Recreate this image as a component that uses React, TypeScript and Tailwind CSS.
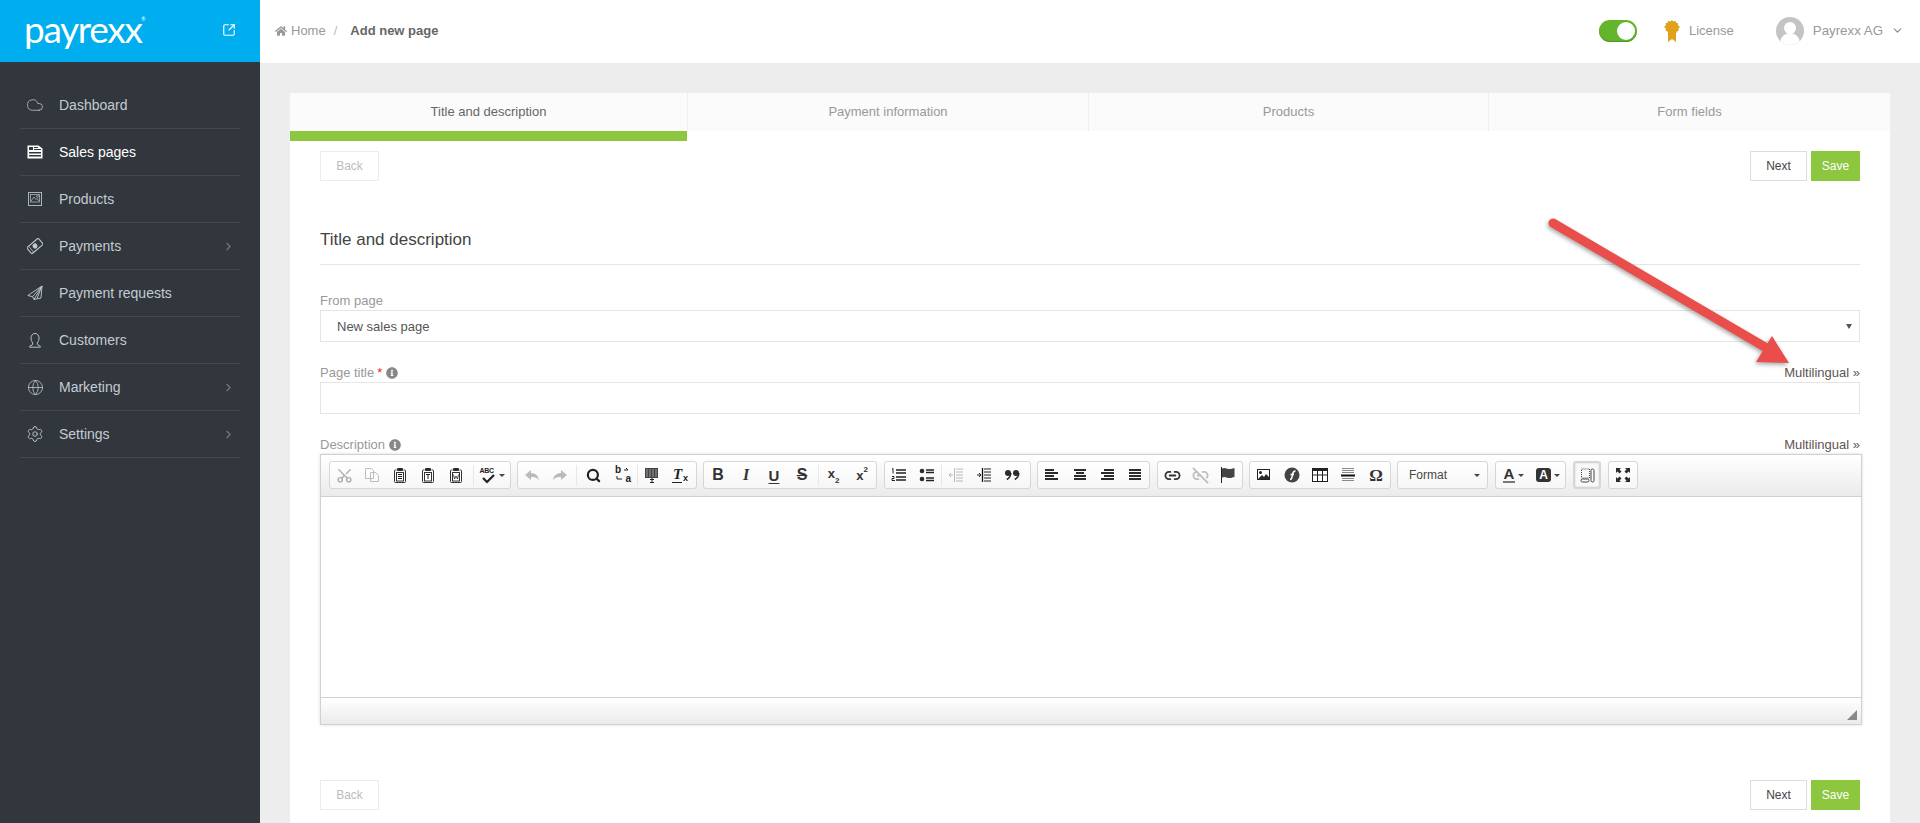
import React from 'react';
import { Cloud, ChevronRight, ChevronDown, SquareArrowOutUpRight, Globe, Settings, Scissors, Search, Link2, Link2Off } from 'lucide-react';
import { FaHome, FaInfoCircle } from 'react-icons/fa';

const NewspaperIcon = () => (
  <svg width="16" height="14" viewBox="0 0 16 14" className="shrink-0">
    <path d="M.5.5h11l4 3v10H.5z" fill="#fff" />
    <rect x="2" y="2" width="4" height="3" fill="#32363d" />
    <rect x="7" y="2" width="4" height="1" fill="#32363d" />
    <rect x="7" y="4" width="7" height="1" fill="#32363d" />
    <rect x="2" y="7" width="12" height="1.5" fill="#32363d" />
    <rect x="2" y="10" width="12" height="1.5" fill="#32363d" />
  </svg>
);

const ProductIcon = () => (
  <svg width="14" height="14" viewBox="0 0 14 14" fill="none" stroke="#a9b3ba" className="shrink-0">
    <rect x=".5" y=".5" width="13" height="13" />
    <rect x="2.5" y="2.5" width="9" height="7.5" strokeWidth=".8" />
    <path d="M3 9l3-4 2 2.5 1-1 2 2.5" strokeWidth=".8" />
    <circle cx="9.5" cy="4.3" r="1" strokeWidth=".8" />
  </svg>
);

const TicketIcon = () => (
  <svg width="16" height="16" viewBox="0 0 16 16" fill="none" stroke="#c3ccd2" className="shrink-0">
    <g transform="rotate(-40 8 8)">
      <rect x="0.5" y="4" width="15" height="8" rx="1" />
      <circle cx="8" cy="8" r="2" fill="#c3ccd2" />
      <path d="M3 4v8" strokeWidth=".7" />
    </g>
  </svg>
);

const PlaneIcon = () => (
  <svg width="16" height="16" viewBox="0 0 16 16" fill="none" stroke="#c3ccd2" strokeLinejoin="round" className="shrink-0">
    <path d="M15 1L.8 10.500l4.700 1.200L7 14.500l7-1.500zM15 1L5.500 11.700M15 1l-5 12.500M15 1L7 14.500" strokeWidth=".9" />
  </svg>
);

const UserIcon = () => (
  <svg width="16" height="16" viewBox="0 0 16 16" fill="none" stroke="#b9c3ca" strokeWidth="1" className="shrink-0">
    <path d="M5.7 11C4.3 9 4 7.5 4 6a4 4.6 0 0 1 8 0c0 1.500-.3 3-1.700 5l0 1.500 3 1.700v1H2.700v-1l3-1.700z" />
  </svg>
);

const navItems = [
  { label: 'Dashboard', icon: <Cloud size={18} strokeWidth={1} color="#c3ccd2" className="shrink-0" /> },
  { label: 'Sales pages', icon: <NewspaperIcon />, active: true },
  { label: 'Products', icon: <ProductIcon /> },
  { label: 'Payments', icon: <TicketIcon />, arrow: true },
  { label: 'Payment requests', icon: <PlaneIcon /> },
  { label: 'Customers', icon: <UserIcon /> },
  { label: 'Marketing', icon: <Globe size={17} strokeWidth={1.1} color="#c3ccd2" className="shrink-0" />, arrow: true },
  { label: 'Settings', icon: <Settings size={18} strokeWidth={1.2} color="#c3ccd2" className="shrink-0" />, arrow: true },
];

const tabs = [
  { label: 'Title and description', width: 'w-[398px]', active: true },
  { label: 'Payment information', width: 'w-[401px]' },
  { label: 'Products', width: 'w-[400px]' },
  { label: 'Form fields', width: 'flex-1', last: true },
];

// 16x16 toolbar drawing
const Svg: React.FC<{ children: React.ReactNode; className?: string }> = ({ children, className }) => (
  <svg width="16" height="16" viewBox="0 0 16 16" fill="#2b2b2b" className={className}>
    {children}
  </svg>
);

const Lines = ({ rows }: { rows: number[][] }) => (
  <Svg>
    {rows.map(([x, w], i) => (
      <rect key={i} x={x} y={2 + i * 3} width={w} height="2" />
    ))}
  </Svg>
);

const PasteIcon = ({ children }: { children: React.ReactNode }) => (
  <Svg>
    <path d="M4.500 3H3.500a1 1 0 0 0-1 1v10.500a1 1 0 0 0 1 1h9a1 1 0 0 0 1-1V4a1 1 0 0 0-1-1h-1" fill="none" stroke="#333" />
    <rect x="5" y="1" width="6" height="3" rx="1" />
    <rect x="4.500" y="5.500" width="7" height="8.500" fill="#fff" stroke="#333" />
    {children}
  </Svg>
);

const Arrowhead = () => <span className="ml-[3px] w-0 h-0 border-x-[3px] border-x-transparent border-t-[3px] border-t-[#444]" />;

const Btn: React.FC<{ children: React.ReactNode; w?: string; grey?: boolean }> = ({ children, w = 'w-[28px]', grey }) => (
  <div className={`${w} h-full flex items-center justify-center ${grey ? 'opacity-30' : ''}`}>{children}</div>
);

const Sep = ({ className = '' }: { className?: string }) => <div className={`w-px h-[21px] self-center bg-[#e8e8e8] ${className}`} />;

const Group: React.FC<{ children: React.ReactNode; className?: string }> = ({ children, className = '' }) => (
  <div className={`h-[28px] flex items-stretch border border-[#d6d6d6] rounded-[3px] bg-gradient-to-b from-white to-[#f6f6f6] ${className}`}>
    {children}
  </div>
);

const Toolbar = () => (
  <div className="h-[42px] pl-[8px] pt-[6px] flex gap-[6px] border-b border-[#d1d1d1] bg-gradient-to-b from-white to-[#ebebeb]">
    <Group className="w-[182px]">
      <Btn grey><Scissors size={17} strokeWidth={2} className="rotate-[-90deg]" /></Btn>
      <Btn grey>
        <Svg>
          <path d="M1.500 1.500h6l2 2v8h-8zM6.500 5.500h5l3 3v6h-8z" fill="#fff" stroke="#333" />
        </Svg>
      </Btn>
      <Btn><PasteIcon><path d="M6 7.500h4M6 9.500h4M6 11.500h4" stroke="#222" /></PasteIcon></Btn>
      <Btn><PasteIcon><path d="M6 7.500h4M8 7.500v4.500" stroke="#222" /></PasteIcon></Btn>
      <Btn><PasteIcon><path d="M5.500 7.500l1 4.500 1.500-3 1.500 3 1-4.500" stroke="#222" fill="none" strokeWidth=".8" /></PasteIcon></Btn>
      <Sep className="ml-[3px]" />
      <Btn w="flex-1">
        <div className="relative w-[16px] h-[16px] text-[7px] font-bold leading-[8px] text-[#222] tracking-[-0.3px]">
          ABC
          <svg width="14" height="10" viewBox="0 0 14 10" className="absolute left-[2px] top-[7px]">
            <path d="M1 4l4 4 7-7" fill="none" stroke="#222" strokeWidth="2.200" />
          </svg>
        </div>
        <Arrowhead />
      </Btn>
    </Group>

    <Group className="w-[180px]">
      <Btn grey><Svg><path d="M7 3L1 8l6 5v-3c3 0 6 .5 8 3-.5-4-3.500-7-8-7z" /></Svg></Btn>
      <Btn grey><Svg><path d="M9 3l6 5-6 5v-3c-3 0-6 .5-8 3 .5-4 3.500-7 8-7z" /></Svg></Btn>
      <Sep className="ml-[2px]" />
      <Btn w="w-[32px]"><Search size={15} strokeWidth={3.500} color="#222" /></Btn>
      <Btn>
        <div className="relative w-[16px] h-[16px] text-[#222] font-bold text-[10px] leading-[10px]">
          <span className="absolute left-0 top-[-2px]">b</span>
          <span className="absolute right-0 bottom-[-1px]">a</span>
          <svg width="16" height="16" viewBox="0 0 16 16" className="absolute inset-0" fill="none" stroke="#222">
            <path d="M9 3h4l-2-2M7 12H2V9" />
          </svg>
        </div>
      </Btn>
      <Sep />
      <Btn>
        <Svg>
          <rect x="1" y="1" width="13" height="10" fill="#444" />
          <path d="M2 3h11M2 5h11M2 7h11M2 9h11" stroke="#ddd" strokeWidth=".6" strokeDasharray="2 1" />
          <path d="M6 12.500h4M8 11v4M6 15.500h4" stroke="#222" />
        </Svg>
      </Btn>
      <Btn>
        <div className="relative w-[16px] h-[16px] text-[#222] font-['Liberation_Serif',serif] italic font-bold text-[15px] leading-[14px]">
          <span className="absolute left-[1px] top-0">T</span>
          <span className="absolute right-0 bottom-[0px] text-[9px] leading-[9px] not-italic font-['Liberation_Sans',sans-serif]">x</span>
          <div className="absolute left-0 bottom-0 w-[10px] h-[1.500px] bg-[#222]" />
        </div>
      </Btn>
    </Group>

    <Group className="w-[174px]">
      <Btn><span className="text-[16px] font-bold text-[#333] leading-none">B</span></Btn>
      <Btn><span className="text-[16px] font-bold italic text-[#333] leading-none font-['Liberation_Serif',serif]">I</span></Btn>
      <Btn><span className="text-[15px] font-bold text-[#333] leading-none underline underline-offset-2">U</span></Btn>
      <Btn><span className="text-[16px] font-bold text-[#333] leading-none line-through">S</span></Btn>
      <Sep className="ml-[2px]" />
      <Btn w="w-[29px]"><span className="text-[13px] font-bold text-[#333] leading-none">x<sub className="text-[8px] align-[-3px] leading-none">2</sub></span></Btn>
      <Btn><span className="text-[13px] font-bold text-[#333] leading-none">x<sup className="text-[8px] align-[4px] leading-none">2</sup></span></Btn>
    </Group>

    <Group className="w-[147px] ml-px">
      <Btn>
        <Svg>
          <path d="M5 3h10M5 6h10M5 10h10M5 13h10" stroke="#222" strokeWidth="1.300" />
          <path d="M1 2l1-.5v5M1 9.500h2v2H1v2h3" fill="none" stroke="#222" />
        </Svg>
      </Btn>
      <Btn>
        <Svg>
          <circle cx="3" cy="4" r="2.300" />
          <circle cx="3" cy="12" r="2.300" />
          <path d="M7 3h8M7 5.500h8M7 11h8M7 13.500h8" stroke="#222" strokeWidth="1.300" />
        </Svg>
      </Btn>
      <Sep />
      <Btn grey>
        <Svg>
          <path d="M6.500 1v14M8 2h7M8 5h7M8 8h7M8 11h7M8 14h7" stroke="#222" fill="none" />
          <path d="M5 8H1M3 6L1 8l2 2" stroke="#222" fill="none" />
        </Svg>
      </Btn>
      <Btn>
        <Svg>
          <path d="M6.500 1v14" stroke="#111" strokeWidth="1.300" />
          <path d="M8 2h7M8 5h7M8 8h7M8 11h7M8 14h7" stroke="#222" fill="none" />
          <path d="M1 8h4M3 6l2 2-2 2" stroke="#222" fill="none" />
        </Svg>
      </Btn>
      <Btn>
        <Svg>
          <circle cx="4" cy="6" r="3" />
          <path d="M6.800 6c0 3-1.500 5-4 6.500" fill="none" stroke="#2b2b2b" strokeWidth="1.600" />
          <circle cx="12" cy="6" r="3" />
          <path d="M14.800 6c0 3-1.500 5-4 6.500" fill="none" stroke="#2b2b2b" strokeWidth="1.600" />
        </Svg>
      </Btn>
    </Group>

    <Group className="w-[113px]">
      <Btn><Lines rows={[[1, 9], [1, 13], [1, 9], [1, 13]]} /></Btn>
      <Btn><Lines rows={[[2, 12], [4, 8], [2, 12], [2, 12]]} /></Btn>
      <Btn><Lines rows={[[5, 10], [2, 13], [5, 10], [2, 13]]} /></Btn>
      <Btn><Lines rows={[[2, 12], [2, 12], [2, 12], [2, 12]]} /></Btn>
    </Group>

    <Group className="w-[86px] ml-px">
      <Btn><Link2 size={17} strokeWidth={2.500} color="#333" /></Btn>
      <Btn grey><Link2Off size={17} strokeWidth={2.500} color="#333" /></Btn>
      <Btn>
        <Svg>
          <path d="M1.500 0v16" stroke="#222" />
          <path d="M2 1.500c3-1.500 5 .5 7 .5s4-.5 5.500-1v9c-2 .5-3.500 1-5.500 1s-4-2-7-.5z" fill="#444" />
        </Svg>
      </Btn>
    </Group>

    <Group className="w-[142px]">
      <Btn>
        <Svg>
          <rect x="1" y="2" width="13" height="11" fill="#222" />
          <rect x="2" y="3" width="11" height="9" fill="#fff" />
          <circle cx="4.500" cy="5.500" r="1.500" fill="#222" />
          <path d="M2 12l4-4 2 2 2-3 3 3v2z" />
        </Svg>
      </Btn>
      <Btn>
        <Svg>
          <circle cx="8" cy="8" r="7.500" fill="#444" />
          <path d="M6 12.500c2 0 2-2 2.500-5S10 4 11.500 4M6.500 7.500H10" fill="none" stroke="#fff" strokeWidth="1.500" />
        </Svg>
      </Btn>
      <Btn>
        <Svg>
          <rect x="0" y="1" width="16" height="14" fill="#222" />
          <path d="M1 4h4v3.500H1zM6 4h4v3.500H6zM11 4h4v3.500h-4zM1 8.500h4V14H1zM6 8.500h4V14H6zM11 8.500h4V14h-4z" fill="#fff" />
        </Svg>
      </Btn>
      <Btn>
        <Svg>
          <path d="M2 1.500h12M2 3.500h12M2 5.500h12M2 11.500h12M2 13.500h12" stroke="#888" />
          <rect x="1" y="7.500" width="14" height="2" fill="#111" />
        </Svg>
      </Btn>
      <Btn><span className="text-[17px] font-bold text-[#333] leading-none font-['Liberation_Serif',serif]">Ω</span></Btn>
    </Group>

    <Group className="w-[91px] items-center pl-[11px] pr-[7px] justify-between">
      <span className="text-[12px] text-[#484848] self-center">Format</span>
      <span className="self-center w-0 h-0 border-x-[3px] border-x-transparent border-t-[3px] border-t-[#444]" />
    </Group>

    <Group className="w-[71px] ml-px">
      <Btn w="w-[35px]">
        <span className="text-[15px] leading-[14px] font-bold text-[#333] border-b-2 border-[#777] px-[1px]">A</span>
        <Arrowhead />
      </Btn>
      <Btn w="flex-1">
        <span className="w-[15px] h-[14px] rounded-[3px] bg-[#333] text-white text-[12px] leading-[14px] font-bold text-center">A</span>
        <Arrowhead />
      </Btn>
    </Group>

    <Group className="w-[28px] ml-px border-[#b0b0b0] border-2 bg-none bg-[#f9f9f9] shadow-[inset_0_0_2px_#ccc]">
      <Btn w="w-full">
        <svg width="15" height="15" viewBox="0 0 15 15" fill="none" stroke="#444">
          <path d="M1.500 1h8v9h-8z" strokeDasharray="1 1" />
          <rect x="11" y="1" width="3" height="13" rx="1.500" />
          <rect x="1" y="11" width="8" height="3" rx="1.500" />
        </svg>
      </Btn>
    </Group>

    <Group className="w-[30px] ml-px">
      <Btn w="w-full">
        <Svg>
          <path d="M1 1h5L4.500 2.500 6.500 4.500 4.500 6.500 2.500 4.500 1 6zM15 1v5l-1.500-1.500-2 2-2-2 2-2L10 1zM1 15v-5l1.500 1.500 2-2 2 2-2 2L6 15zM15 15h-5l1.500-1.500-2-2 2-2 2 2L15 10z" />
        </Svg>
      </Btn>
    </Group>
  </div>
);

const ActionRow = ({ className = '' }: { className?: string }) => (
  <div className={`flex justify-between ${className}`}>
    <button className="w-[59px] h-[30px] border border-[#ececec] text-[12px] text-[#bbb]">Back</button>
    <div className="flex gap-[4px]">
      <button className="w-[57px] h-[30px] border border-[#ddd] text-[12px] text-[#444]">Next</button>
      <button className="w-[49px] h-[30px] bg-[#8dc63f] text-[12px] text-white">Save</button>
    </div>
  </div>
);

const FieldLabel: React.FC<{ children: React.ReactNode; multi?: boolean }> = ({ children, multi }) => (
  <div className="h-[18px] flex items-center justify-between text-[13px] leading-[18px] text-[#999]">
    <div className="flex items-center">{children}</div>
    {multi && <span className="text-[#5e5450]">Multilingual »</span>}
  </div>
);

const Info = () => <FaInfoCircle size={12} color="#888" className="ml-[4px]" />;

export default function App() {
  return (
    <div className="relative w-full h-[823px] overflow-hidden flex bg-[#ededed] font-['Liberation_Sans',Arial,sans-serif]">
      <aside className="w-[260px] shrink-0 bg-[#32363d]">
        <div className="h-[62px] bg-[#00aeef] flex items-center justify-between pl-[24px] pr-[24px]">
          <div className="relative text-white text-[37px] font-['Lato',sans-serif] font-normal leading-none tracking-[-1.300px] pb-[6px]">
            payrexx
            <span className="absolute right-[-4px] top-[7px] text-[5px] tracking-normal">®</span>
          </div>
          <SquareArrowOutUpRight size={14} color="#fff" strokeWidth={2} className="mb-[3px]" />
        </div>
        <nav className="pt-[20px] px-[20px]">
          {navItems.map((item) => (
            <div key={item.label} className="h-[47px] flex items-center border-b border-[#43474e] pl-[7px] pr-[5px]">
              <div className="w-[16px] flex justify-center">{item.icon}</div>
              <span className={`ml-[16px] text-[14px] flex-1 ${item.active ? 'text-white' : 'text-[#c3ccd2]'}`}>{item.label}</span>
              {item.arrow && <ChevronRight size={13} color="#777c82" />}
            </div>
          ))}
        </nav>
      </aside>

      <main className="flex-1 min-w-0">
        <header className="h-[63px] bg-white flex items-center pl-[15px] pr-[16px] pb-[2px] text-[13px]">
          <FaHome size={12} color="#999" />
          <span className="ml-[4px] text-[#999]">Home</span>
          <span className="ml-[8px] text-[#bbb]">/</span>
          <span className="ml-[13px] font-bold text-[#666]">Add new page</span>
          <div className="ml-auto flex items-center">
            <div className="w-[38px] h-[22px] rounded-full bg-[#63b52b] flex items-center justify-end pr-[2px] shadow-[inset_0_-1px_1px_#4d9a1f]">
              <div className="w-[18px] h-[18px] rounded-full bg-white" />
            </div>
            <svg width="16" height="22" viewBox="0 0 16 22" className="ml-[27px]" fill="#e0a21d">
              <path d="M8 0l1.500 1.500L11.500.8l.7 2 2 .4-.2 2.100L16 7l-1.600 1.700.4 2-2 .7-.6 2-2.100-.4L8 14l-1.700-1-2.100.4-.6-2-2-.7.4-2L0 7l1.800-1.700-.2-2.100 2-.4.7-2 2.200.7z" />
              <path d="M4 12h8v10l-4-3-4 3z" />
            </svg>
            <span className="ml-[9px] text-[#999]">License</span>
            <div className="ml-[42px] w-[28px] h-[28px] rounded-full bg-[#c4c4c4] overflow-hidden flex flex-col items-center">
              <div className="w-[12px] h-[14px] mt-[5px] rounded-full bg-white" />
              <div className="w-[20px] h-[14px] mt-[-1px] rounded-t-full bg-white" />
            </div>
            <span className="ml-[9px] text-[#999] text-[13.300px]">Payrexx AG</span>
            <ChevronDown size={13} color="#888" className="ml-[8px]" />
          </div>
        </header>

        <div className="pt-[30px] px-[30px]">
          <div className="bg-white h-[800px]">
            <div className="flex items-start">
              {tabs.map((tab) => (
                <div key={tab.label} className={tab.width}>
                  <div className={`h-[38px] bg-[#fbfbfb] flex items-center justify-center text-[13px] text-[#999] ${tab.last ? '' : 'border-r border-[#efefef]'}`}>
                    <span className={tab.active ? 'text-[#666]' : ''}>{tab.label}</span>
                  </div>
                  {tab.active && <div className="h-[10px] w-[397px] bg-[#8dc63f]" />}
                </div>
              ))}
            </div>

            <div className="px-[30px] pt-[10px]">
              <ActionRow />

              <h2 className="mt-[47px] h-[24px] text-[17px] leading-[24px] text-[#444] font-normal">Title and description</h2>
              <div className="mt-[12px] h-px bg-[#e5e5e5]" />

              <div className="mt-[27px]">
                <FieldLabel>From page</FieldLabel>
                <div className="relative h-[32px] border border-[#e5e5e5] flex items-center pl-[16px] pt-[2px] text-[13px] text-[#555]">
                  New sales page
                  <span className="absolute right-[7px] top-[13px] w-0 h-0 border-x-[3px] border-x-transparent border-t-[5px] border-t-[#555]" />
                </div>
              </div>

              <div className="mt-[22px]">
                <FieldLabel multi>
                  Page title <span className="ml-[3px] text-[#f5222d]">*</span>
                  <Info />
                </FieldLabel>
                <div className="h-[32px] border border-[#e5e5e5]" />
              </div>

              <div className="mt-[22px]">
                <FieldLabel multi>
                  Description
                  <Info />
                </FieldLabel>
                <div className="w-[1542px] h-[271px] border border-[#d1d1d1] shadow-[0_0_3px_rgba(0,0,0,0.15)] flex flex-col">
                  <Toolbar />
                  <div className="flex-1 bg-white" />
                  <div className="relative h-[27px] border-t border-[#d1d1d1] bg-gradient-to-b from-white to-[#ebebeb]">
                    <span className="absolute right-[4px] bottom-[4px] w-0 h-0 border-l-[10px] border-l-transparent border-b-[10px] border-b-[#888]" />
                  </div>
                </div>
              </div>

              <ActionRow className="mt-[55px]" />
            </div>
          </div>
        </div>
      </main>

      {/* annotation arrow drawn over the page */}
      <svg
        width="260"
        height="170"
        viewBox="1540 210 260 170"
        className="absolute left-[1540px] top-[210px] drop-shadow-[-1px_2px_2px_rgba(0,0,0,0.35)]"
      >
        <path d="M1553 223L1770 350" stroke="#e94e4a" strokeWidth="9" strokeLinecap="round" />
        <path d="M1772 336L1789 363L1756 362z" fill="#e94e4a" />
      </svg>
    </div>
  );
}
